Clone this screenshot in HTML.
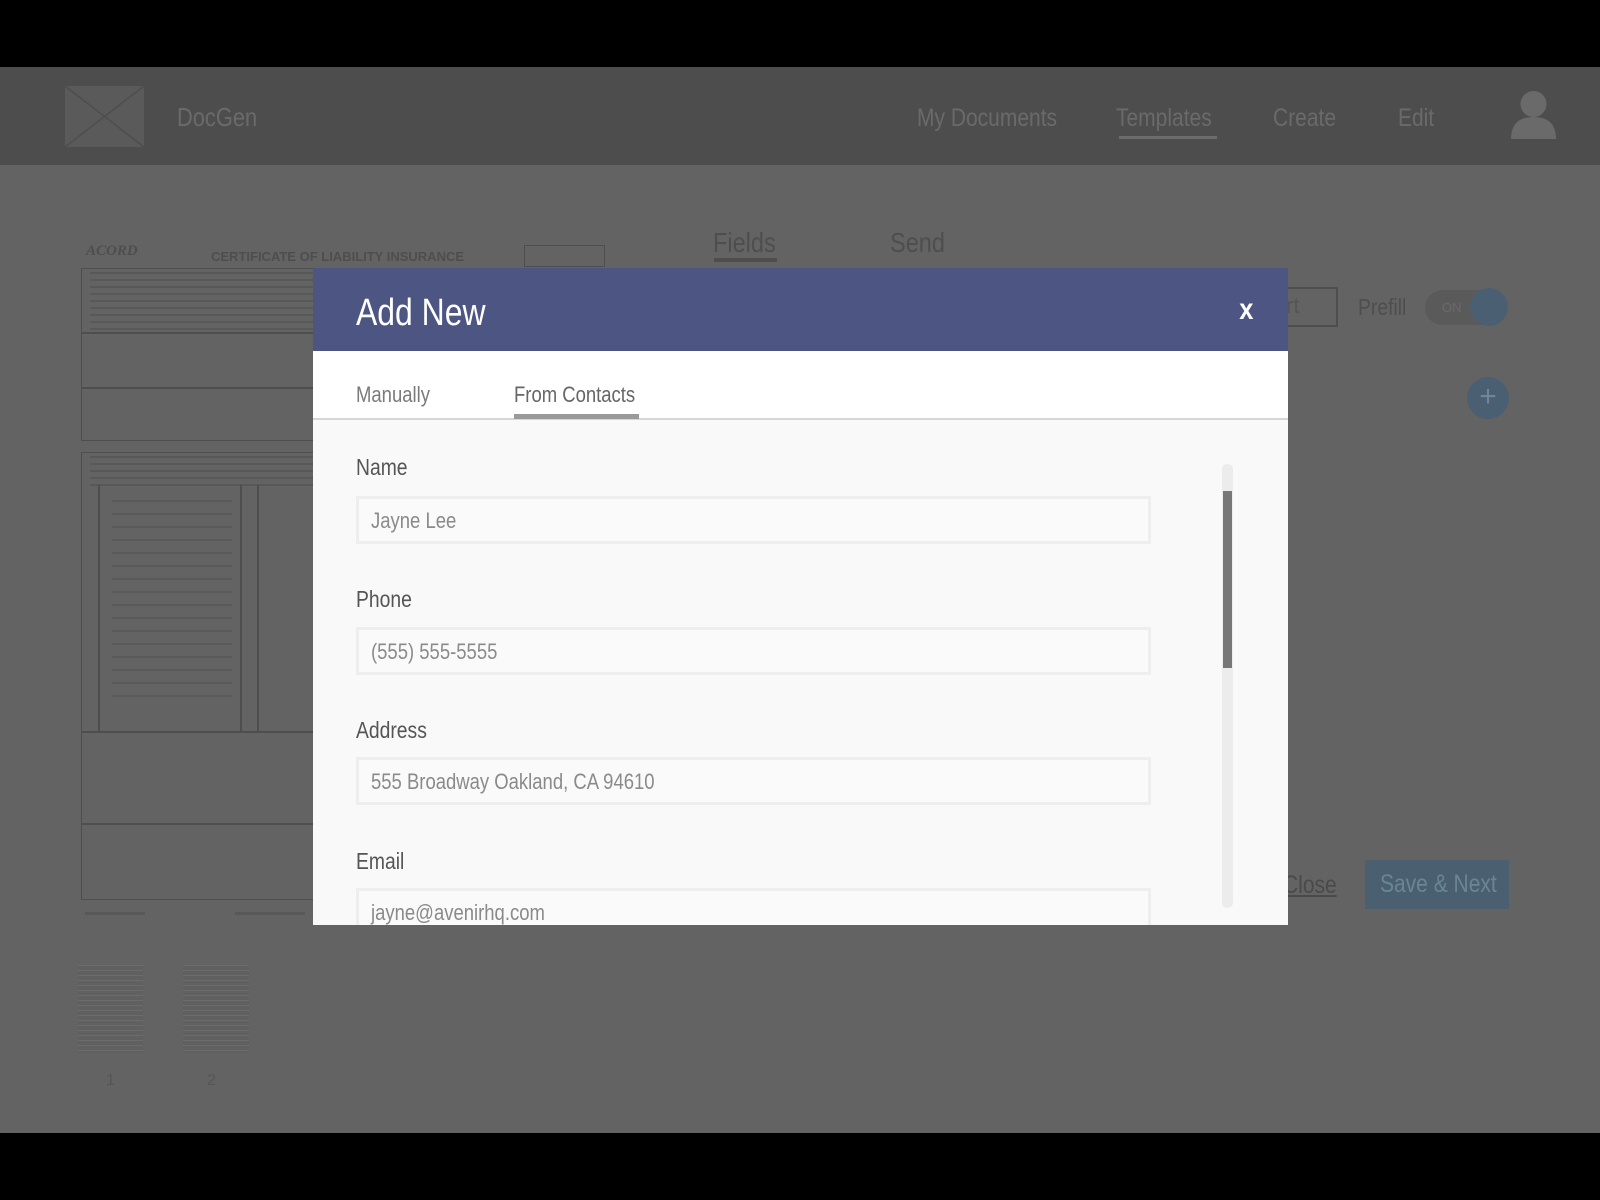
<!DOCTYPE html>
<html><head><meta charset="utf-8"><style>
*{margin:0;padding:0;box-sizing:border-box}
body{width:1600px;height:1200px;background:#000;position:relative;overflow:hidden;font-family:"Liberation Sans Narrow","Liberation Sans",sans-serif}
.a{position:absolute}
.n{transform:scaleX(.84);transform-origin:0 0;white-space:nowrap}
.s{display:inline-block;transform:scaleX(.84);transform-origin:0 0;white-space:nowrap}
.hdr{left:0;top:67px;width:1600px;height:98px;background:#4d4d4d}
.main{left:0;top:165px;width:1600px;height:968px;background:#636363}
.nav{color:#6a6a6a;font-size:25px;top:104px}
.doc{border:1px solid #4e4e4e}
.lbl{font-size:23px;color:#555;left:43px}
.inp{left:43px;width:795px;height:48px;border:3px solid #eee;background:#fafafa;font-size:22px;color:#8a8a8a;padding:9px 0 0 12px}
</style></head><body>
<div class="a hdr"></div>
<div class="a main"></div>
<div class="a" style="left:65px;top:86px;width:79px;height:61px;background:#5a5a5a">
<svg width="79" height="61"><line x1="0" y1="0" x2="79" y2="61" stroke="#4e4e4e" stroke-width="1.5"/><line x1="79" y1="0" x2="0" y2="61" stroke="#4e4e4e" stroke-width="1.5"/></svg></div>
<div class="a n" style="left:177px;top:102px;font-size:26px;color:#6a6a6a">DocGen</div>
<div class="a nav n" style="left:917px">My Documents</div>
<div class="a nav n" style="left:1116px">Templates</div>
<div class="a" style="left:1119px;top:136px;width:98px;height:3px;background:#6c6c6c"></div>
<div class="a nav n" style="left:1273px">Create</div>
<div class="a nav n" style="left:1398px">Edit</div>
<svg class="a" style="left:1510px;top:90px" width="47" height="49"><circle cx="23.5" cy="14" r="13" fill="#6a6a6a"/><path d="M1 49 Q1 27 23.5 27 Q46 27 46 49Z" fill="#6a6a6a"/></svg>
<div class="a" style="left:86px;top:243px;font:italic bold 15px 'Liberation Serif',serif;color:#4e4e4e">ACORD</div>
<div class="a" style="left:211px;top:249px;font:bold 13px 'Liberation Sans',sans-serif;color:#4e4e4e">CERTIFICATE OF LIABILITY INSURANCE</div>
<div class="a doc" style="left:524px;top:245px;width:81px;height:22px"></div>
<div class="a doc" style="left:81px;top:268px;width:240px;height:65px"></div>
<div class="a" style="left:90px;top:272px;width:230px;height:58px;background:repeating-linear-gradient(#585858 0 2px,transparent 2px 7px)"></div>
<div class="a doc" style="left:81px;top:333px;width:240px;height:108px"></div>
<div class="a doc" style="left:81px;top:387px;width:240px;height:1px"></div>
<div class="a doc" style="left:81px;top:452px;width:240px;height:280px"></div>
<div class="a" style="left:90px;top:456px;width:230px;height:30px;background:repeating-linear-gradient(#585858 0 2px,transparent 2px 7px)"></div>
<div class="a doc" style="left:98px;top:485px;width:1px;height:247px"></div>
<div class="a doc" style="left:240px;top:485px;width:1px;height:247px"></div>
<div class="a doc" style="left:257px;top:485px;width:1px;height:247px"></div>
<div class="a" style="left:112px;top:500px;width:120px;height:200px;background:repeating-linear-gradient(#5a5a5a 0 2px,transparent 2px 13px)"></div>
<div class="a doc" style="left:81px;top:732px;width:240px;height:92px"></div>
<div class="a doc" style="left:81px;top:824px;width:240px;height:76px"></div>
<div class="a" style="left:85px;top:912px;width:60px;height:3px;background:#585858"></div>
<div class="a" style="left:235px;top:912px;width:70px;height:3px;background:#585858"></div>
<div class="a n" style="left:713px;top:227px;font-size:28px;color:#4e4e4e">Fields</div>
<div class="a" style="left:714px;top:258px;width:63px;height:4px;background:#4e4e4e"></div>
<div class="a n" style="left:890px;top:227px;font-size:28px;color:#4e4e4e">Send</div>
<div class="a" style="left:1270px;top:287px;width:68px;height:40px;border:2px solid #4e4e4e;font-size:22px;color:#555;padding:4px 0 0 14px">rt</div>
<div class="a n" style="left:1358px;top:294px;font-size:23px;color:#4e4e4e">Prefill</div>
<div class="a" style="left:1425px;top:290px;width:80px;height:35px;border-radius:18px;background:#5a5a5a;font-size:13px;color:#6a6a6a;padding:10px 0 0 17px">ON</div>
<div class="a" style="left:1470px;top:288px;width:38px;height:38px;border-radius:50%;background:#4a5f72"></div>
<div class="a" style="left:1467px;top:377px;width:42px;height:42px;border-radius:50%;background:#4a5f72;color:#6f8598;font-size:30px;text-align:center;line-height:40px">+</div>
<div class="a n" style="left:1283px;top:871px;font-size:25px;color:#4a4a4a;text-decoration:underline">Close</div>
<div class="a" style="left:1365px;top:860px;width:144px;height:49px;background:#4a6070;color:#6b8597;font-size:25px;line-height:48px;padding-left:15px"><span class="s">Save &amp; Next</span></div>
<div class="a" style="left:78px;top:965px;width:65px;height:88px;background:repeating-linear-gradient(#6c6c6c 0 1px,#606060 1px 5px)"></div>
<div class="a" style="left:183px;top:965px;width:66px;height:88px;background:repeating-linear-gradient(#6c6c6c 0 1px,#606060 1px 5px)"></div>
<div class="a" style="left:106px;top:1072px;font-size:16px;color:#555">1</div>
<div class="a" style="left:207px;top:1072px;font-size:16px;color:#555">2</div>
<div class="a" style="left:313px;top:268px;width:975px;height:657px;background:#f9f9f9;overflow:hidden">
 <div class="a" style="left:0;top:0;width:975px;height:83px;background:#4d5582"></div>
 <div class="a n" style="left:43px;top:24px;font-size:38px;color:#fff">Add New</div>
 <div class="a" style="left:925px;top:25px;font-size:30px;color:#fff;font-weight:bold;transform:scaleX(.85)">x</div>
 <div class="a" style="left:0;top:83px;width:975px;height:69px;background:#fff;border-bottom:2px solid #d6d6d6"></div>
 <div class="a n" style="left:43px;top:114px;font-size:22px;color:#7a7a7a">Manually</div>
 <div class="a n" style="left:201px;top:114px;font-size:22px;color:#666">From Contacts</div>
 <div class="a" style="left:201px;top:146px;width:125px;height:5px;background:#9a9a9a"></div>
 <div class="a lbl n" style="top:186px">Name</div>
 <div class="a inp" style="top:228px"><span class="s">Jayne Lee</span></div>
 <div class="a lbl n" style="top:318px">Phone</div>
 <div class="a inp" style="top:359px"><span class="s">(555) 555-5555</span></div>
 <div class="a lbl n" style="top:449px">Address</div>
 <div class="a inp" style="top:489px"><span class="s">555 Broadway Oakland, CA 94610</span></div>
 <div class="a lbl n" style="top:580px">Email</div>
 <div class="a inp" style="top:620px"><span class="s">jayne@avenirhq.com</span></div>
 <div class="a" style="left:909px;top:196px;width:11px;height:444px;border-radius:5px;background:#ececec"></div>
 <div class="a" style="left:910px;top:223px;width:9px;height:177px;background:#777"></div>
</div>
</body></html>
